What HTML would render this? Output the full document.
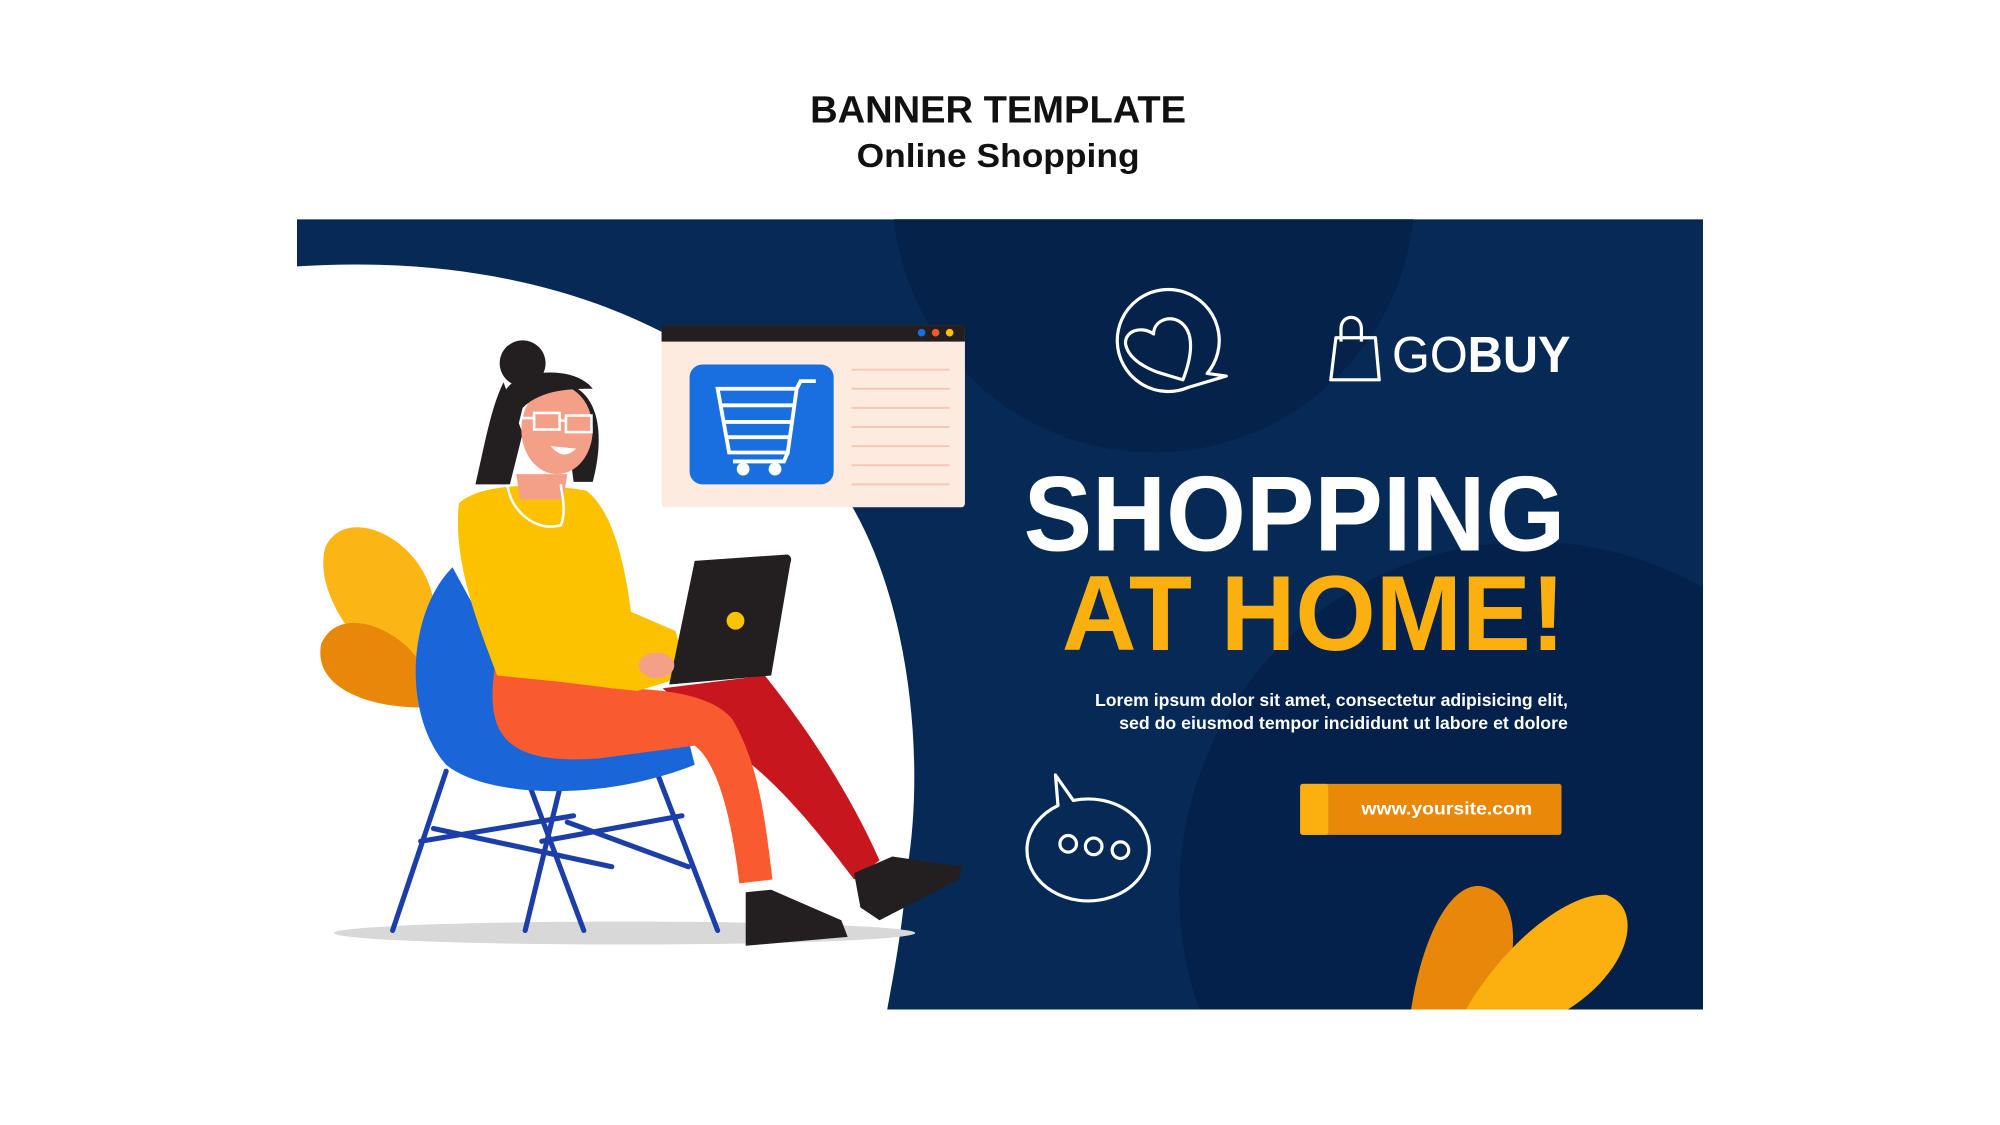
<!DOCTYPE html>
<html><head><meta charset="utf-8"><style>
html,body{margin:0;padding:0;background:#fff;width:2000px;height:1125px;overflow:hidden}
svg{display:block}
text{font-family:"Liberation Sans",sans-serif;font-weight:bold}
</style></head><body>
<svg width="2000" height="1125" viewBox="0 0 1569 882.6" preserveAspectRatio="none" xmlns="http://www.w3.org/2000/svg">
<defs><clipPath id="b"><rect x="233" y="172" width="1103" height="620"/></clipPath></defs>
<rect width="1569" height="883" fill="#fff"/>
<text x="783" y="96" text-anchor="middle" font-size="30" fill="#111" textLength="295" lengthAdjust="spacingAndGlyphs">BANNER TEMPLATE</text>
<text x="783" y="131" text-anchor="middle" font-size="26" fill="#111" textLength="222" lengthAdjust="spacingAndGlyphs">Online Shopping</text>
<g clip-path="url(#b)">
<rect x="233" y="172" width="1103" height="620" fill="#062a55"/>
<circle cx="905" cy="150" r="205" fill="#04224a"/>
<circle cx="1200" cy="700" r="275" fill="#03214a"/>
<path d="M233 209 C450 195 600 280 670 400 C715 480 725 600 712 680 C708 730 700 770 696 792 L233 792Z" fill="#fff"/>
<!-- browser -->
<rect x="519" y="255" width="238" height="143" rx="3" fill="#fdebe0"/>
<rect x="519" y="255" width="238" height="13" fill="#231f20"/>
<circle cx="723" cy="261" r="3" fill="#1a6fe0"/><circle cx="734" cy="261" r="3" fill="#f15a2b"/><circle cx="745" cy="261" r="3" fill="#fcc200"/>
<rect x="541" y="286" width="113" height="94" rx="10" fill="#1a6fe0"/>
<g stroke="#fff" stroke-width="3" fill="none"><path d="M563 305 L625 305 L618 355 L572 355 Z M566 318 L622 318 M568 331 L620 331 M570 343 L619 343 M625 305 L628 299 L640 299 M618 355 L615 362 L575 362"/></g>
<circle cx="583" cy="368" r="5" fill="#fff"/><circle cx="608" cy="368" r="5" fill="#fff"/>
<g stroke="#f5c8b4" stroke-width="1.5"><path d="M668 290H745M668 305H745M668 320H745M668 335H745M668 350H745M668 365H745M668 380H745"/></g>
<!-- left leaves -->
<path d="M255 430 C270 395 330 420 340 470 C350 510 340 540 325 545 C290 520 245 470 255 430Z" fill="#fbb615"/>
<path d="M252 505 C265 475 310 490 330 520 L330 555 C290 555 245 540 252 505Z" fill="#e8880a"/>
<!-- shadow -->
<ellipse cx="490" cy="732" rx="228" ry="9" fill="#d8d8d8"/>
<!-- chair legs -->
<g stroke="#1b3ea8" stroke-width="4" stroke-linecap="round" fill="none">
<path d="M350 605 L308 730 M415 615 L458 730 M440 615 L412 730 M515 605 L563 730 M330 660 L450 640 M340 650 L480 680 M425 660 L535 640 M445 645 L540 680"/></g>
<!-- chair seat -->
<path d="M355 445 C320 480 315 560 350 600 C380 625 470 630 545 600 L540 580 L400 560 L385 500 Z" fill="#1a66d8"/>
<path d="M520 540 L600 530 C640 580 670 630 690 675 L670 690 C640 650 600 600 560 580Z" fill="#c8161e"/>
<path d="M670 685 L700 672 L755 680 L752 690 L690 722 L675 712Z" fill="#231f20"/>
<path d="M585 700 L605 698 L660 722 L665 735 L585 742Z" fill="#231f20"/>
<path d="M388 525 C380 580 400 600 470 595 L545 585 C565 600 575 650 580 693 L606 690 C600 640 595 600 575 565 C560 545 520 540 480 540 L410 525Z" fill="#fa5a30"/>
<path d="M360 395 C375 380 420 378 460 385 C480 400 490 440 495 480 L530 495 L540 530 L500 542 L480 540 L440 535 L390 530 C375 490 355 440 360 395Z" fill="#fcc200"/>
<path d="M545 440 L618 435 Q622 437 620 442 L605 530 L525 537Z" fill="#231f20"/>
<circle cx="577" cy="487" r="7" fill="#fcc200"/>
<ellipse cx="515" cy="522" rx="14" ry="10" fill="#f4a088"/>
<path d="M405 372 L445 372 L442 392 L408 392Z" fill="#f4a088"/>
<path d="M395 300 C385 320 380 350 373 380 L400 380 L410 340Z" fill="#231f20"/>
<path d="M440 300 C470 305 475 340 465 378 L450 378Z" fill="#231f20"/>
<ellipse cx="437" cy="337" rx="28" ry="35" fill="#f4a088"/>
<path d="M395 310 C400 290 450 285 465 305 C450 305 425 305 410 320 L405 340 L395 340Z" fill="#231f20"/>
<circle cx="410" cy="285" r="18" fill="#231f20"/>
<g stroke="#fff" stroke-width="2" fill="none"><rect x="419" y="324" width="20" height="13"/><rect x="444" y="326" width="20" height="13"/><path d="M439 330h5M419 328h-10"/><path d="M398 380 C400 400 420 418 440 412 C445 400 440 385 440 380"/></g>
<path d="M432 350 Q442 362 452 352Z" fill="#fff"/>
<g stroke="#fff" stroke-width="2.5" fill="none" stroke-linejoin="round">
<path d="M947 293 A40 40 0 1 0 932 304 L962 295 Z"/>
<path d="M908 292 L928 298 C935 280 938 260 925 252 C915 247 905 253 905 262 C895 255 882 260 883 270 C885 280 895 287 908 292Z"/>
<path d="M830 632 L828 608 L842 628 A48 40 0 1 1 830 632Z"/>
<circle cx="838" cy="662" r="6.5"/><circle cx="858" cy="664" r="6.5"/><circle cx="879" cy="667" r="6.5"/>
<path d="M1044 298 L1048 265 L1079 265 L1082 298 Z M1052 268 V258 C1052 246 1068 246 1068 258 V268"/>
</g>
<text x="1092" y="292" font-size="40" fill="#fff" textLength="140" lengthAdjust="spacingAndGlyphs"><tspan font-weight="normal">GO</tspan>BUY</text>
<text x="803" y="432" font-size="84" fill="#fff" textLength="425" lengthAdjust="spacingAndGlyphs">SHOPPING</text>
<text x="833" y="510" font-size="84" fill="#fcb010" textLength="395" lengthAdjust="spacingAndGlyphs">AT HOME!</text>
<text x="1230" y="554" font-size="13.5" fill="#fff" text-anchor="end" textLength="371" lengthAdjust="spacingAndGlyphs">Lorem ipsum dolor sit amet, consectetur adipisicing elit,</text>
<text x="1230" y="572" font-size="13.5" fill="#fff" text-anchor="end" textLength="352" lengthAdjust="spacingAndGlyphs">sed do eiusmod tempor incididunt ut labore et dolore</text>
<rect x="1020" y="615" width="205" height="40" rx="2" fill="#e8890a"/>
<rect x="1020" y="615" width="22" height="40" rx="2" fill="#fcb010"/>
<text x="1135" y="639" font-size="13.5" fill="#fff" text-anchor="middle" textLength="134" lengthAdjust="spacingAndGlyphs">www.yoursite.com</text>
<path d="M1107 792 C1115 740 1135 695 1160 695 C1190 698 1195 740 1175 792Z" fill="#e8880a"/>
<path d="M1150 792 C1180 740 1230 700 1260 702 C1290 712 1280 760 1230 792Z" fill="#fcb010"/>
</g>
</svg>
</body></html>
